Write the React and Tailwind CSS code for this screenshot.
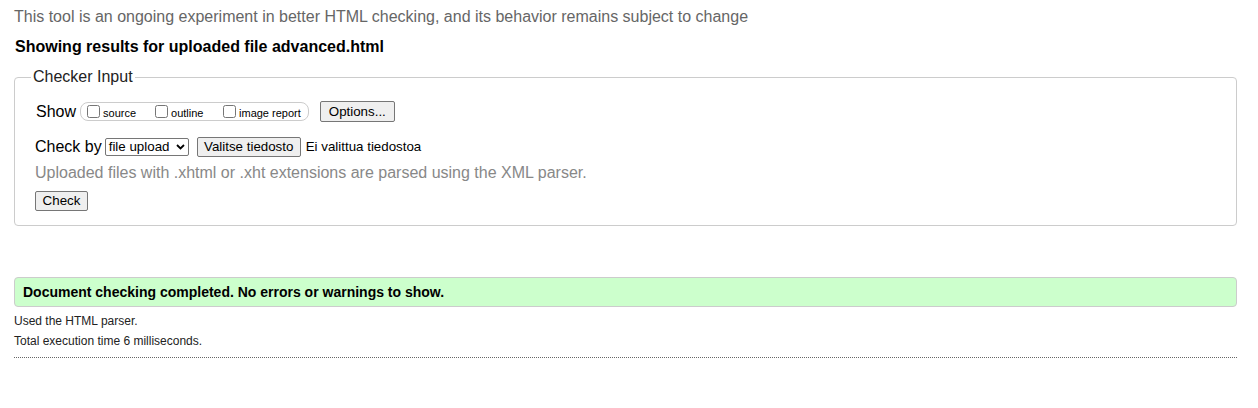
export default function App() {
  return (
    <div className="min-h-[408px] bg-white pl-[14px] pr-[21px] font-['Liberation_Sans',Arial,sans-serif] text-black">
      <p className="pt-[7px] text-[16px] leading-[20px] text-[#666]">
        This tool is an ongoing experiment in better HTML checking, and its behavior remains subject to change
      </p>
      <h2 className="mt-[10px] pl-px text-[16px] font-bold leading-[20px]">
        Showing results for uploaded file advanced.html
      </h2>

      <fieldset className="mt-[11px] rounded-[4px] border border-[#ccc] px-[20px] pb-[13px] pt-[15px]">
        <legend className="-ml-[4px] px-[2px] text-[16px] leading-[18px] text-[#222]">Checker Input</legend>

        <div className="flex items-center text-[16px] leading-[20px]">
          <span className="ml-px mr-[4px]">Show</span>
          <span className="flex h-[19px] items-center rounded-[8px] border border-[#ccc] pl-[6px] pr-[7px] text-[11px]">
            <label className="flex w-[68px] items-center">
              <input type="checkbox" className="m-0 mr-[3px] h-[13px] w-[13px]" />
              <span className="mt-[2px]">source</span>
            </label>
            <label className="flex w-[68px] items-center">
              <input type="checkbox" className="m-0 mr-[3px] h-[13px] w-[13px]" />
              <span className="mt-[2px]">outline</span>
            </label>
            <label className="flex items-center">
              <input type="checkbox" className="m-0 mr-[3px] h-[13px] w-[13px]" />
              <span className="mt-[2px]">image report</span>
            </label>
          </span>
          <button className="ml-[11px] h-[21px] w-[75px] rounded-[2px] border border-[#767676] bg-[#efefef] text-[13.33px] leading-[17px]">
            Options...
          </button>
        </div>

        <div className="mt-[15px] flex items-center text-[16px] leading-[20px]">
          <span className="mr-[3px]">Check by</span>
          <span className="flex h-[18px] w-[84px] items-center justify-between rounded-[2px] border border-[#767676] bg-white pl-[3px] pr-[3px] text-[13.33px]">
            <span>file upload</span>
            <svg width="9" height="6" viewBox="0 0 9 6">
              <path d="M1 1l3.5 3.5L8 1" fill="none" stroke="#000" strokeWidth="1.8" />
            </svg>
          </span>
          <button className="ml-[8px] h-[20px] w-[104px] rounded-[2px] border border-[#767676] bg-[#efefef] text-[13.33px] leading-[16px]">
            Valitse tiedosto
          </button>
          <span className="ml-[5px] text-[13.33px]">Ei valittua tiedostoa</span>
        </div>

        <p className="mt-[6px] text-[16px] leading-[20px] text-[#888]">
          Uploaded files with .xhtml or .xht extensions are parsed using the XML parser.
        </p>

        <button className="mt-[8px] h-[20px] w-[53px] rounded-[2px] border border-[#767676] bg-[#efefef] text-[13.33px] leading-[16px]">
          Check
        </button>
      </fieldset>

      <div className="mt-[51px] rounded-[4px] border border-[#ccc] bg-[#ccffcc] px-[8px] py-[5px] text-[14px] font-bold leading-[18px]">
        Document checking completed. No errors or warnings to show.
      </div>

      <p className="mt-[7px] text-[12px] leading-[15px] text-[#222]">Used the HTML parser.</p>
      <p className="mt-[5px] text-[12px] leading-[15px] text-[#222]">Total execution time 6 milliseconds.</p>
      <div className="mt-[8px] border-t border-dotted border-[#666]" />
    </div>
  );
}
